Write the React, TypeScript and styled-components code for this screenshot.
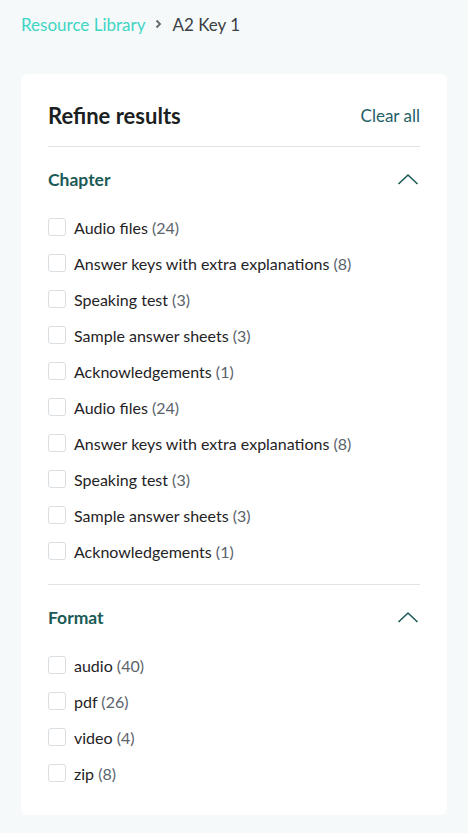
import React from "react";
import styled, { createGlobalStyle } from "styled-components";

const Global = createGlobalStyle`
  html, body { margin: 0; padding: 0; background: #f5f9fa; }
  body { font-family: "Lato", "Open Sans", sans-serif; color: #1f2326; }
  * { box-sizing: border-box; }
`;

const Page = styled.div`
  padding: 11px 21px 20px 21px;
`;

const Breadcrumb = styled.nav`
  display: flex;
  align-items: center;
  gap: 10px;
  height: 26px;
  font-size: 17px;
  margin-bottom: 37px;
`;

const Crumb = styled.a`
  color: #3fd5c5;
  text-decoration: none;
`;

const Current = styled.span`
  color: #3a3f44;
`;

const Card = styled.div`
  background: #ffffff;
  border-radius: 6px;
  padding: 27px 27px 24px 27px;
`;

const CardHeader = styled.div`
  display: flex;
  align-items: center;
  justify-content: space-between;
  height: 28px;
  box-sizing: content-box;
  padding-bottom: 17px;
  border-bottom: 1px solid #dfe5e6;
`;

const Title = styled.h2`
  margin: 0;
  font-size: 22px;
  font-weight: 700;
  color: #1c1f22;
`;

const ClearAll = styled.button`
  border: none;
  background: none;
  padding: 0;
  font-family: inherit;
  font-size: 17px;
  color: #1f5f68;
  cursor: pointer;
`;

const Section = styled.section<{ $last?: boolean }>`
  padding: 20px 0 ${(p) => (p.$last ? "0" : "15px")} 0;
  border-bottom: ${(p) => (p.$last ? "none" : "1px solid #dfe5e6")};
`;

const SectionHeader = styled.div`
  display: flex;
  align-items: center;
  justify-content: space-between;
  height: 24px;
  margin-bottom: 18px;
`;

const SectionTitle = styled.h3`
  margin: 0;
  font-size: 17.5px;
  font-weight: 700;
  color: #1b5a56;
`;

const List = styled.ul`
  list-style: none;
  margin: 0;
  padding: 0;
`;

const Item = styled.li`
  display: flex;
  align-items: center;
  height: 36px;
  gap: 8px;
  font-size: 16px;
  color: #1f2326;
`;

const Box = styled.span`
  width: 18px;
  height: 18px;
  border: 1px solid #d9dee2;
  border-radius: 3px;
  background: #fff;
  flex: none;
`;

const Count = styled.span`
  color: #5b636b;
`;

const Chevron = () => (
  <svg width="22" height="14" viewBox="0 0 22 14" fill="none" style={{ marginRight: 1 }}>
    <path d="M1.5 12 L11 3 L20.5 12" stroke="#1b5a56" strokeWidth="1.6" />
  </svg>
);

const chapters: [string, number][] = [
  ["Audio files", 24],
  ["Answer keys with extra explanations", 8],
  ["Speaking test", 3],
  ["Sample answer sheets", 3],
  ["Acknowledgements", 1],
  ["Audio files", 24],
  ["Answer keys with extra explanations", 8],
  ["Speaking test", 3],
  ["Sample answer sheets", 3],
  ["Acknowledgements", 1],
];

const formats: [string, number][] = [
  ["audio", 40],
  ["pdf", 26],
  ["video", 4],
  ["zip", 8],
];

const FilterList = ({ items }: { items: [string, number][] }) => (
  <List>
    {items.map(([label, n], i) => (
      <Item key={i}>
        <Box />
        <span>
          {label} <Count>({n})</Count>
        </span>
      </Item>
    ))}
  </List>
);

export default function App() {
  return (
    <>
      <Global />
      <Page>
        <Breadcrumb>
          <Crumb href="#">Resource Library</Crumb>
          <svg width="7" height="10" viewBox="0 0 7 10">
            <path d="M1.5 1.5 L5 5 L1.5 8.5" stroke="#5f666d" strokeWidth="1.8" fill="none" />
          </svg>
          <Current>A2 Key 1</Current>
        </Breadcrumb>
        <Card>
          <CardHeader>
            <Title>Refine results</Title>
            <ClearAll>Clear all</ClearAll>
          </CardHeader>
          <Section>
            <SectionHeader>
              <SectionTitle>Chapter</SectionTitle>
              <Chevron />
            </SectionHeader>
            <FilterList items={chapters} />
          </Section>
          <Section $last>
            <SectionHeader>
              <SectionTitle>Format</SectionTitle>
              <Chevron />
            </SectionHeader>
            <FilterList items={formats} />
          </Section>
        </Card>
      </Page>
    </>
  );
}
